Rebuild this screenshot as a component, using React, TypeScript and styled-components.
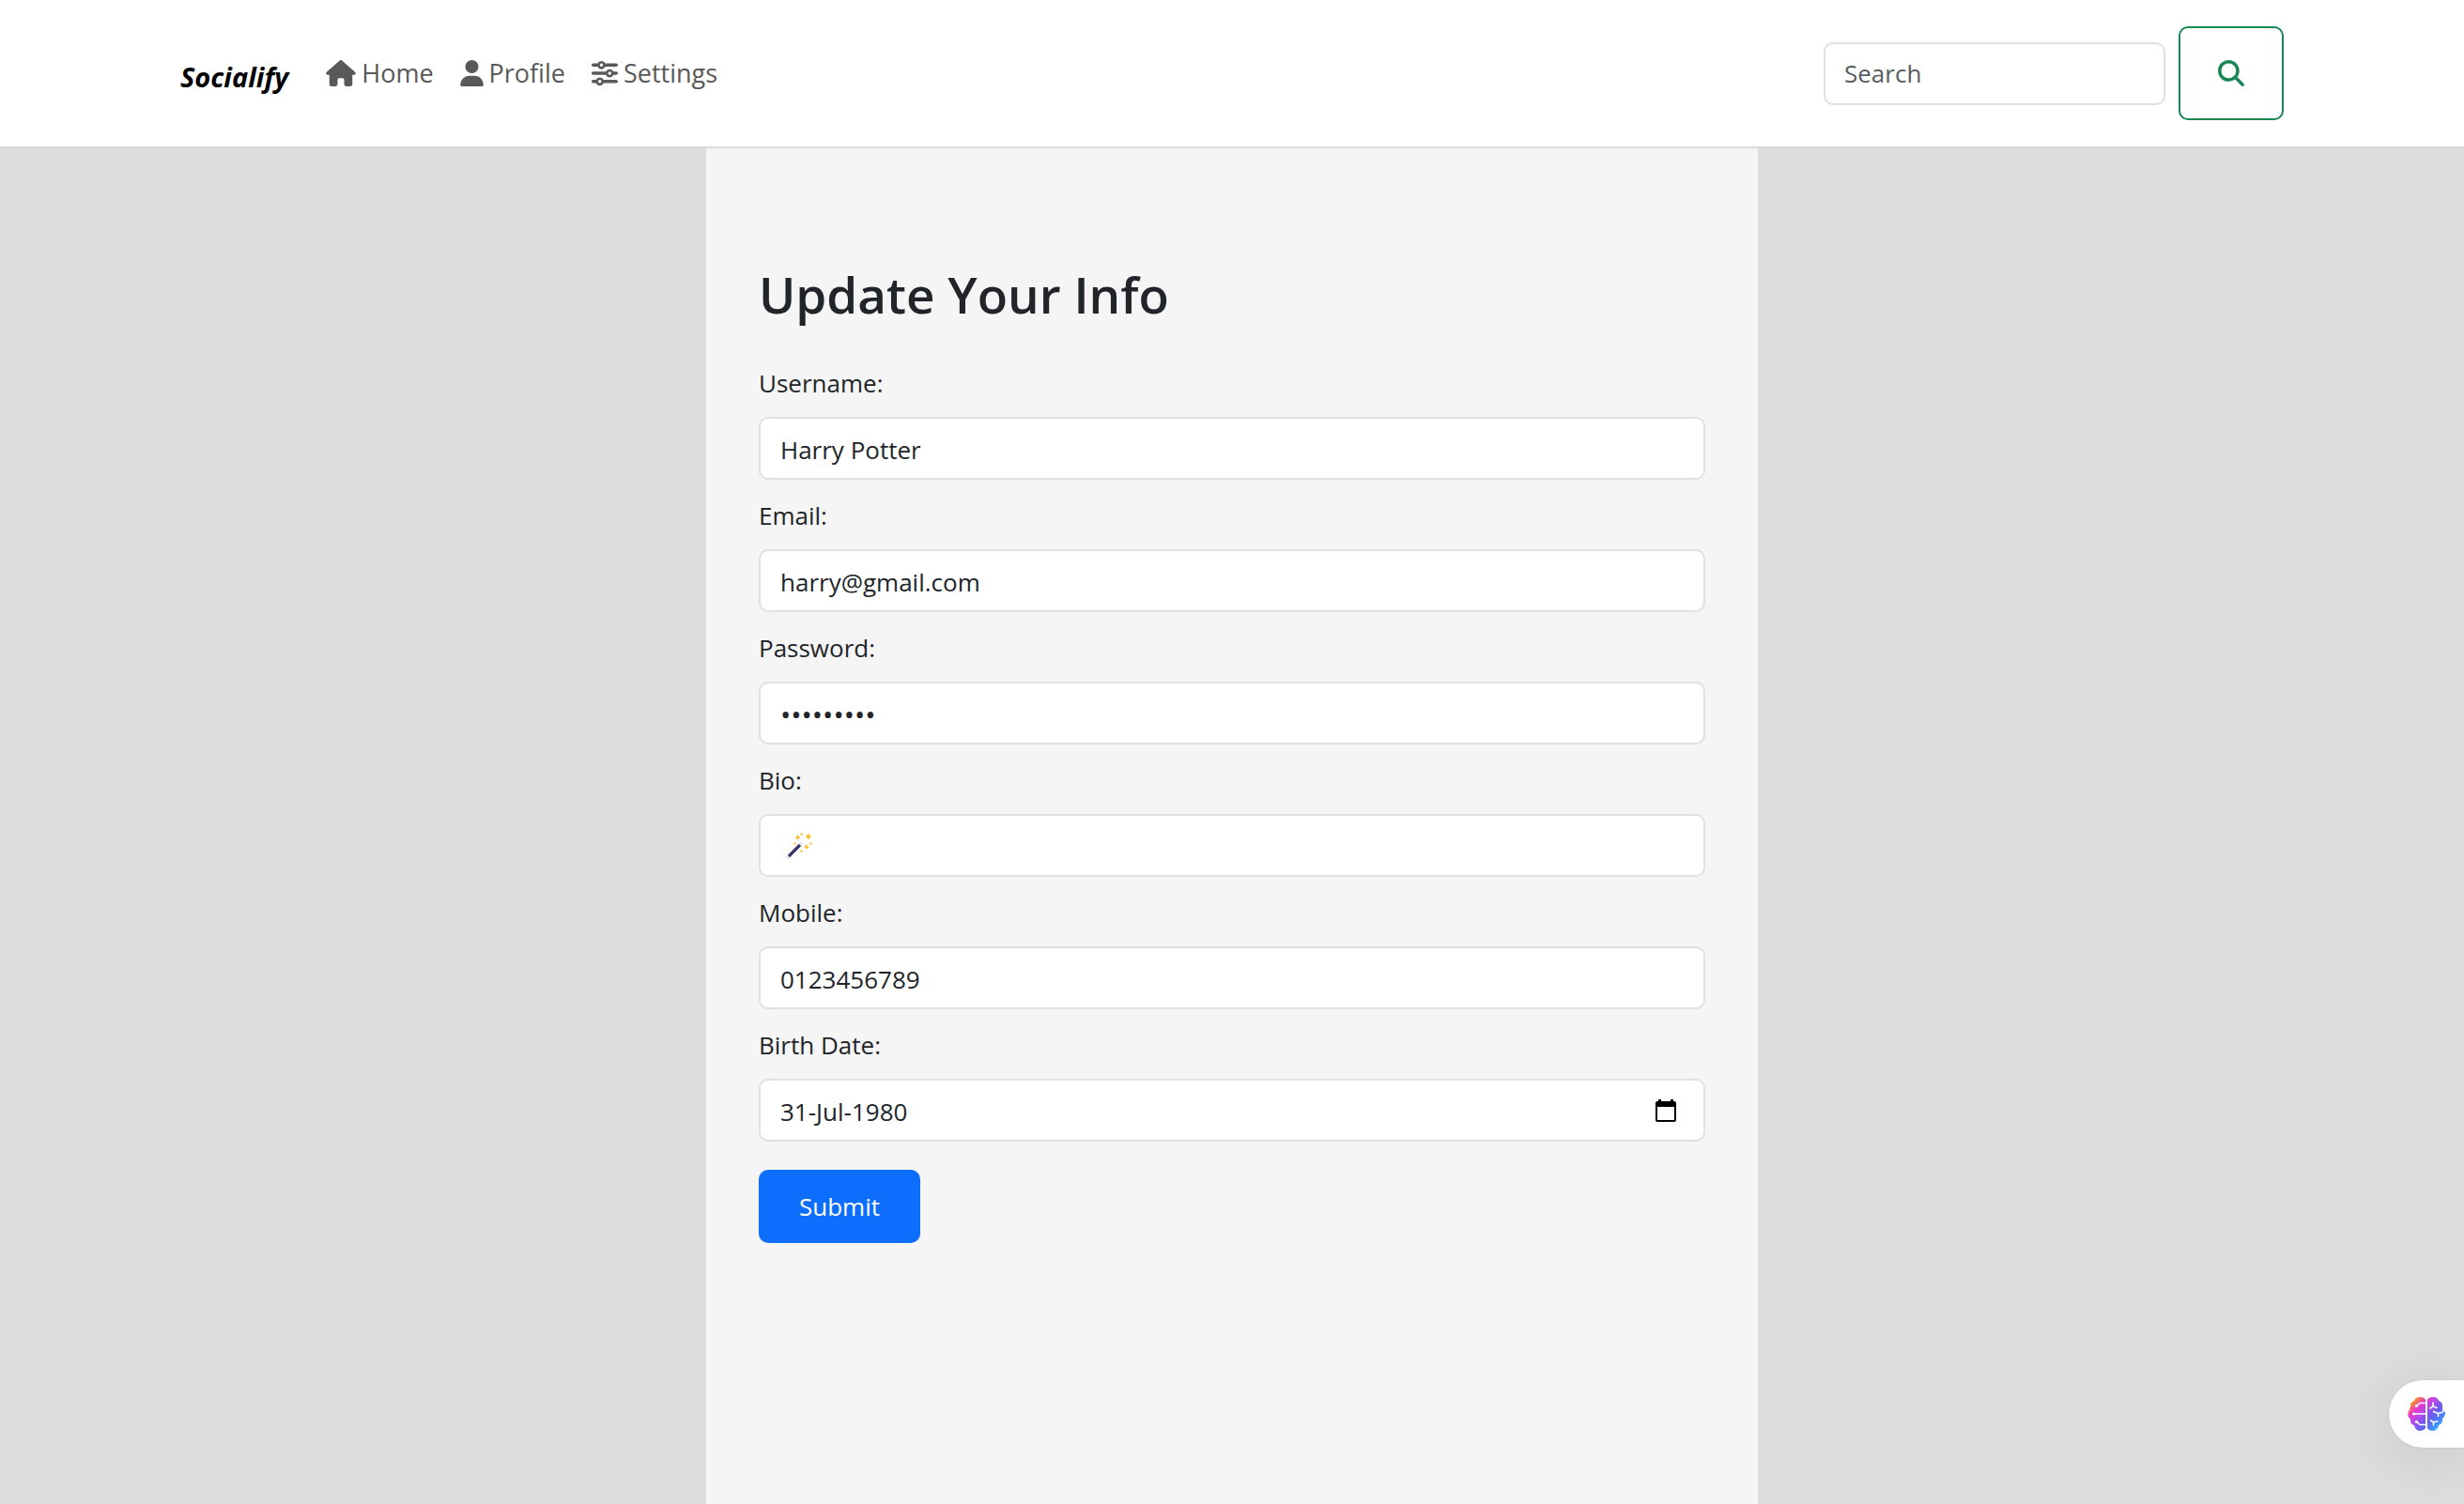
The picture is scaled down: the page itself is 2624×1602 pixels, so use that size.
import React from 'react';
import styled, { createGlobalStyle } from 'styled-components';
import { FaHouse, FaUser, FaSliders, FaMagnifyingGlass } from 'react-icons/fa6';

const GlobalStyle = createGlobalStyle`
  *, *::before, *::after { box-sizing: border-box; }
  body {
    margin: 0;
    background: #ddd;
    color: #212529;
    font-family: "Open Sans", "Noto Sans", sans-serif;
    font-size: 26px;
    line-height: 42px;
  }
  input, button { font: inherit; color: inherit; }
`;

const Page = styled.div`
  display: flex;
  flex-direction: column;
  min-height: 100vh;
`;

const Header = styled.header`
  display: flex;
  align-items: center;
  justify-content: space-between;
  padding: 28px 192px;
  background: #fff;
  border-bottom: 2px solid #d9dadb;
`;

const Nav = styled.nav`
  display: flex;
  align-items: center;
  gap: 28px;
`;

const Brand = styled.a`
  margin-right: 12px;
  padding-top: 8px;
  color: #000;
  font-size: 29px;
  font-style: italic;
  font-weight: 700;
  text-decoration: none;
`;

const NavLink = styled.a<{ $iconWidth: number }>`
  display: flex;
  align-items: center;
  gap: 6px;
  color: #595959;
  font-size: 27px;
  text-decoration: none;

  svg {
    flex: none;
    width: ${({ $iconWidth }) => $iconWidth}px;
    height: 28px;
  }
`;

const SearchForm = styled.form`
  display: flex;
  align-items: center;
  gap: 14px;
`;

const TextInput = styled.input`
  display: block;
  width: 100%;
  height: 67px;
  padding: 12px 21px 10px;
  border: 2px solid #dee2e6;
  border-radius: 10px;
  background: #fff;
  outline: none;

  &[type="password"] { font-size: 30px; }
  &::placeholder { color: #595c5f; opacity: 1; }
`;

const SearchInput = styled(TextInput)`
  width: 364px;
  padding: 10px 20px;
`;

const SearchButton = styled.button`
  display: grid;
  place-items: center;
  width: 112px;
  height: 100px;
  border: 2px solid #198754;
  border-radius: 10px;
  background: transparent;
  color: #198754;
  font-size: 28px;
`;

const Panel = styled.main`
  flex: 1;
  width: 100%;
  max-width: 1120px;
  margin: 0 auto;
  padding: 122px 56px 56px;
  background: #f5f5f5;
`;

const Title = styled.h1`
  margin: 0 0 39px;
  font-size: 53px;
  font-weight: 600;
  line-height: 68px;
`;

const Field = styled.div`
  margin-bottom: 17px;
`;

const Label = styled.label`
  display: block;
  margin-bottom: 15px;
`;

const Control = styled.div`
  position: relative;
`;

const PickerButton = styled.button`
  position: absolute;
  top: 0;
  right: 24px;
  display: grid;
  place-items: center;
  width: 36px;
  height: 100%;
  padding: 0;
  border: 0;
  background: none;
`;

const BioMark = styled.span`
  position: absolute;
  top: 0;
  left: 29px;
  display: flex;
  align-items: center;
  height: 100%;
  pointer-events: none;
`;

const SubmitButton = styled.button`
  width: 172px;
  height: 78px;
  margin-top: 13px;
  border: 0;
  border-radius: 10px;
  background: #0d6efd;
  color: #fff;
`;

const AssistantButton = styled.button`
  position: fixed;
  right: 0;
  bottom: 60px;
  display: flex;
  align-items: center;
  width: 80px;
  height: 72px;
  padding: 0 20px;
  border: 0;
  border-radius: 36px 0 0 36px;
  background: #fff;
  box-shadow: 0 0 2px rgba(0, 0, 0, 0.2), 0 10px 64px rgba(0, 0, 0, 0.1);
`;

const CalendarIcon = () => (
  <svg width="22" height="24" viewBox="0 0 22 24" aria-hidden="true">
    <path d="M3 0h3v2h10V0h3v2h1q2 0 2 2v18q0 2-2 2H2q-2 0-2-2V4q0-2 2-2h1zM2 8v14h18V8z" fill="#000" fillRule="evenodd" />
  </svg>
);

const WandIcon = () => (
  <svg width="28" height="28" viewBox="0 0 28 28" aria-hidden="true">
    <path d="M2 26 16 12" stroke="#e3e1ea" strokeWidth="3.6" strokeLinecap="round" />
    <path d="M3 25 15 13" stroke="#3f3566" strokeWidth="3.2" />
    <g fill="#fcbf35">
      <path d="M24 0q.7 3.2 4 4-3.300.8-4 4-.7-3.200-4-4 3.300-.8 4-4z" />
      <path d="M12.500 2q.5 2 3 3-2.500.8-3 3-.5-2.200-3-3 2.500-1 3-3z" />
      <path d="M22 12q.6 2.300 3 3-2.400.8-3 3-.6-2.200-3-3 2.400-.7 3-3z" />
      <circle cx="16.500" cy="1.500" r="1.200" />
      <circle cx="9.500" cy="11.500" r="1.200" />
      <circle cx="26.500" cy="11.500" r="1.200" />
      <circle cx="16.500" cy="19.500" r="1.200" />
    </g>
  </svg>
);

const BrainIcon = () => (
  <svg width="40" height="36" viewBox="0 0 40 36" aria-hidden="true">
    <defs>
      <linearGradient id="brain" x1="4" y1="3" x2="35" y2="34" gradientUnits="userSpaceOnUse">
        <stop offset="0" stopColor="#ff9a1f" />
        <stop offset=".1" stopColor="#fb7d45" />
        <stop offset=".24" stopColor="#ea35cf" />
        <stop offset=".42" stopColor="#b44bea" />
        <stop offset=".62" stopColor="#6a5cf0" />
        <stop offset=".8" stopColor="#4b7cfa" />
        <stop offset="1" stopColor="#35c0fb" />
      </linearGradient>
    </defs>
    <path
      fill="url(#brain)"
      d="M19 3C18 1 16 0 13 0 10 0 8 1.500 7 4 4 5 2.500 7.500 3 11 1.500 12.500 2 14 1 15 0 17 0 20 1 21.500 2 23 3.500 23 3 25c0 3 1.500 4.500 4 5 .5 3.500 3 6 6 6 3 0 5-1 6-3zM21 3c1-2 3-3 6-3 3 0 5 1.500 6 4 3 1 4.500 3.500 4 7 0 1 0 2 0 3 1.500 0 3 1 3 3.500 0 2.500-1.500 4.500-3 5.500.5 4-1 6-4 7-.5 3.500-3 6-6 6-3 0-5-1-6-3z"
    />
    <g fill="none" stroke="#fff" strokeWidth="1.600" strokeLinecap="round" strokeLinejoin="round">
      <path d="M19 6.500h-6L10 9M19 18H6.500M19 29.500h-6L10 27" />
      <path d="M27 6v4l-3 2M27 10l4 1.500M27.500 15.500l5 2 4-1 3-3M32.500 17.500v3M24.500 25l3 2 4-1M27.500 27v3" />
    </g>
    <g fill="#fff">
      <circle cx="9.500" cy="9.500" r="1.600" />
      <circle cx="6.500" cy="18" r="1.600" />
      <circle cx="9.500" cy="26.500" r="1.600" />
    </g>
  </svg>
);

export default function App() {
  return (
    <>
      <GlobalStyle />
      <Page>
        <Header>
          <Nav>
            <Brand href="#">Socialify</Brand>
            <NavLink href="#home" $iconWidth={32}><FaHouse />Home</NavLink>
            <NavLink href="#profile" $iconWidth={25}><FaUser />Profile</NavLink>
            <NavLink href="#settings" $iconWidth={28}><FaSliders />Settings</NavLink>
          </Nav>
          <SearchForm role="search">
            <SearchInput type="search" placeholder="Search" aria-label="Search" />
            <SearchButton type="button" aria-label="Search"><FaMagnifyingGlass /></SearchButton>
          </SearchForm>
        </Header>
        <Panel>
          <Title>Update Your Info</Title>
          <form>
            <Field>
              <Label htmlFor="username">Username:</Label>
              <TextInput id="username" type="text" defaultValue="Harry Potter" />
            </Field>
            <Field>
              <Label htmlFor="email">Email:</Label>
              <TextInput id="email" type="email" defaultValue="harry@gmail.com" />
            </Field>
            <Field>
              <Label htmlFor="password">Password:</Label>
              <TextInput id="password" type="password" defaultValue="alohomora" />
            </Field>
            <Field>
              <Label htmlFor="bio">Bio:</Label>
              <Control>
                <TextInput id="bio" type="text" />
                <BioMark><WandIcon /></BioMark>
              </Control>
            </Field>
            <Field>
              <Label htmlFor="mobile">Mobile:</Label>
              <TextInput id="mobile" type="tel" defaultValue="0123456789" />
            </Field>
            <Field>
              <Label htmlFor="birth">Birth Date:</Label>
              <Control>
                <TextInput id="birth" type="text" defaultValue="31-Jul-1980" />
                <PickerButton type="button" aria-label="Choose date"><CalendarIcon /></PickerButton>
              </Control>
            </Field>
            <SubmitButton type="button">Submit</SubmitButton>
          </form>
        </Panel>
      </Page>
      <AssistantButton type="button" aria-label="Open assistant"><BrainIcon /></AssistantButton>
    </>
  );
}
